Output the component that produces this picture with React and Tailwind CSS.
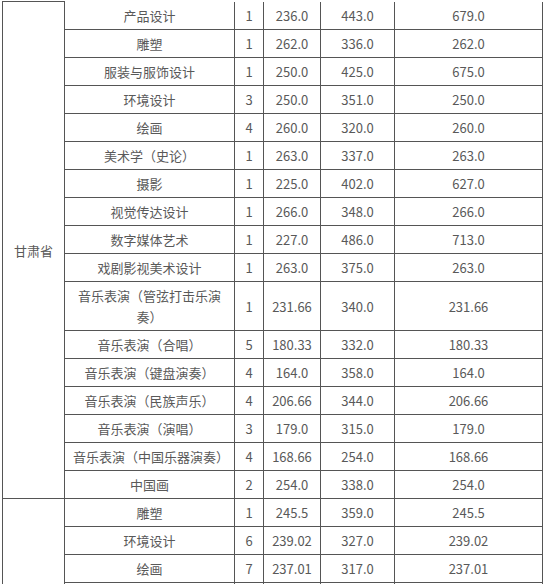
import React from 'react';

const gansu = [
  ['产品设计', '1', '236.0', '443.0', '679.0'],
  ['雕塑', '1', '262.0', '336.0', '262.0'],
  ['服装与服饰设计', '1', '250.0', '425.0', '675.0'],
  ['环境设计', '3', '250.0', '351.0', '250.0'],
  ['绘画', '4', '260.0', '320.0', '260.0'],
  ['美术学（史论）', '1', '263.0', '337.0', '263.0'],
  ['摄影', '1', '225.0', '402.0', '627.0'],
  ['视觉传达设计', '1', '266.0', '348.0', '266.0'],
  ['数字媒体艺术', '1', '227.0', '486.0', '713.0'],
  ['戏剧影视美术设计', '1', '263.0', '375.0', '263.0'],
  ['音乐表演（管弦打击乐演奏）', '1', '231.66', '340.0', '231.66'],
  ['音乐表演（合唱）', '5', '180.33', '332.0', '180.33'],
  ['音乐表演（键盘演奏）', '4', '164.0', '358.0', '164.0'],
  ['音乐表演（民族声乐）', '4', '206.66', '344.0', '206.66'],
  ['音乐表演（演唱）', '3', '179.0', '315.0', '179.0'],
  ['音乐表演（中国乐器演奏）', '4', '168.66', '254.0', '168.66'],
  ['中国画', '2', '254.0', '338.0', '254.0'],
];

// next province, only its first rows are visible
const next = [
  ['雕塑', '1', '245.5', '359.0', '245.5'],
  ['环境设计', '6', '239.02', '327.0', '239.02'],
  ['绘画', '7', '237.01', '317.0', '237.01'],
  ['', '', '', '', ''],
];

const cell = 'border border-[#555] px-[8px] py-[3px] h-[28px] text-center align-middle leading-[21px]';

function Group({ name, rows, first }) {
  return rows.map((r, i) => (
    <tr key={i}>
      {i === 0 && (
        <td rowSpan={rows.length} className={cell}>
          {name}
        </td>
      )}
      {r.map((v, j) => (
        <td key={j} className={`${cell} ${first && i === 0 ? 'border-t-0' : ''}`}>
          {v}
        </td>
      ))}
    </tr>
  ));
}

export default function App() {
  return (
    <div className="h-[584px] w-[543px] overflow-hidden bg-white">
      <table
        className="ml-[2px] mt-px w-[540px] table-fixed border-collapse text-[13px] text-[#595959]"
        style={{ fontFamily: '"Noto Sans CJK SC", "Noto Sans", sans-serif' }}
      >
        <colgroup>
          <col className="w-[62px]" />
          <col className="w-[170px]" />
          <col className="w-[29px]" />
          <col className="w-[57px]" />
          <col className="w-[74px]" />
          <col className="w-[148px]" />
        </colgroup>
        <tbody>
          <Group name="甘肃省" rows={gansu} first />
          <Group name="" rows={next} />
        </tbody>
      </table>
    </div>
  );
}
